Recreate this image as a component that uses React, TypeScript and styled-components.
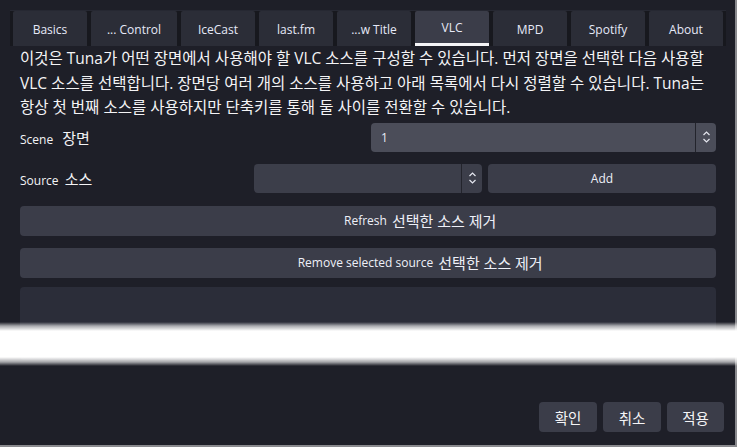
import React from "react";
import styled, { createGlobalStyle } from "styled-components";

const Global = createGlobalStyle`
  html, body { margin: 0; padding: 0; background: #8a8a8e; }
  body { width: 737px; height: 447px; overflow: hidden; }
  * { box-sizing: border-box; }
`;

const FONT = `"Open Sans", "Noto Sans CJK KR", sans-serif`;

const Root = styled.div`
  position: relative;
  width: 735px;
  height: 445px;
  background: #1e1f28;
  display: flex;
  flex-direction: column;
  font-family: ${FONT};
  color: #f2f3f7;
`;

const TabBar = styled.div`
  margin: 10px 0 0 10px;
  width: 716px;
  height: 36px;
  display: flex;
  gap: 4px;
  padding: 0 3px;
  background: #17181e;
  border-top: 1px solid #262832;
`;

const Tab = styled.div<{ $w: number; $active?: boolean }>`
  width: ${(p) => p.$w}px;
  height: 100%;
  display: flex;
  align-items: center;
  justify-content: center;
  padding-top: ${(p) => (p.$active ? "0" : "2px")};
  background: ${(p) => (p.$active ? "#3b3d49" : "#2b2d37")};
  border-radius: 2px 2px 0 0;
  border-bottom: ${(p) => (p.$active ? "3px solid #f4f4f6" : "none")};
  font-size: 12px;
  color: #e6e9f7;
  white-space: nowrap;
`;

const Content = styled.div`
  display: flex;
  flex-direction: column;
  padding: 0 19px 0 20px;
`;

const Description = styled.p`
  margin: 0;
  font-size: 15.5px;
  line-height: 24.5px;
  color: #f4f4f6;
`;

const Row = styled.div<{ $mt: number }>`
  display: flex;
  align-items: center;
  height: 29px;
  margin-top: ${(p) => p.$mt}px;
  gap: 6px;
`;

const Label = styled.div`
  flex: 1;
  font-size: 12px;
  color: #f4f4f6;
  white-space: nowrap;
`;

const Ko = styled.span<{ $overflow?: boolean; $gap?: number }>`
  font-size: 15px;
  margin-left: ${(p) => p.$gap ?? 2}px;
  ${(p) =>
    p.$overflow
      ? `display: inline-block; width: 0; white-space: nowrap; overflow: visible;`
      : ""}
`;

const SpinBox = styled.div<{ $w: number; $bg: string }>`
  width: ${(p) => p.$w}px;
  height: 100%;
  display: flex;
  align-items: stretch;
  background: ${(p) => p.$bg};
  border-radius: 4px;
  overflow: hidden;
`;

const SpinValue = styled.div`
  flex: 1;
  display: flex;
  align-items: center;
  padding-left: 10px;
  font-size: 12px;
  color: #e8ebf7;
  border-right: 1px solid #23242c;
`;

const SpinArrows = styled.div`
  width: 20px;
  display: flex;
  align-items: center;
  justify-content: center;
`;

const Button = styled.div<{ $w?: number; $mt?: number; $h?: number }>`
  ${(p) => (p.$w ? `width: ${p.$w}px;` : "")}
  height: ${(p) => p.$h ?? 29}px;
  ${(p) => (p.$mt !== undefined ? `margin-top: ${p.$mt}px;` : "")}
  display: flex;
  align-items: center;
  justify-content: center;
  background: #3b3d49;
  border-radius: 4px;
  font-size: 12px;
  color: #eef0f8;
  white-space: nowrap;
`;

const ListBox = styled.div`
  margin-top: 9px;
  height: 73px;
  background: #2b2d39;
  border-radius: 4px;
`;

const BottomBar = styled.div`
  margin-top: auto;
  display: flex;
  justify-content: flex-end;
  gap: 6px;
  padding: 0 11px 13px 0;
`;

const DialogButton = styled.div<{ $w: number }>`
  width: ${(p) => p.$w}px;
  height: 30px;
  display: flex;
  align-items: center;
  justify-content: center;
  background: #3b3d49;
  border-radius: 4px;
  font-size: 14.5px;
  color: #f4f4f6;
`;

const Band = styled.div`
  position: absolute;
  left: 0;
  top: 322px;
  width: 737px;
  height: 44px;
  background: linear-gradient(
    to bottom,
    rgba(255, 255, 255, 0) 0px,
    rgba(255, 255, 255, 0.6) 4px,
    #ffffff 9px,
    #ffffff 35px,
    rgba(255, 255, 255, 0.6) 40px,
    rgba(255, 255, 255, 0) 44px
  );
  pointer-events: none;
`;

const Chevrons = () => (
  <svg width="9" height="14" viewBox="0 0 9 14" fill="none">
    <path d="M1.5 5 L4.5 2 L7.5 5" stroke="#e4e6ee" strokeWidth="1.2" />
    <path d="M1.5 9 L4.5 12 L7.5 9" stroke="#e4e6ee" strokeWidth="1.2" />
  </svg>
);

const tabs: { label: string; w: number; active?: boolean }[] = [
  { label: "Basics", w: 74 },
  { label: "... Control", w: 86 },
  { label: "IceCast", w: 74 },
  { label: "last.fm", w: 74 },
  { label: "...w Title", w: 74 },
  { label: "VLC", w: 74, active: true },
  { label: "MPD", w: 74 },
  { label: "Spotify", w: 74 },
  { label: "About", w: 74 },
];

export default function App() {
  return (
    <>
      <Global />
      <Root>
        <TabBar>
          {tabs.map((t) => (
            <Tab key={t.label} $w={t.w} $active={t.active}>
              {t.label}
            </Tab>
          ))}
        </TabBar>
        <Content>
          <Description>
            이것은 Tuna가 어떤 장면에서 사용해야 할 VLC 소스를 구성할 수 있습니다. 먼저 장면을 선택한 다음 사용할
            VLC 소스를 선택합니다. 장면당 여러 개의 소스를 사용하고 아래 목록에서 다시 정렬할 수 있습니다. Tuna는
            항상 첫 번째 소스를 사용하지만 단축키를 통해 둘 사이를 전환할 수 있습니다.
          </Description>
          <Row $mt={3}>
            <Label>
              Scene <Ko $gap={6}>장면</Ko>
            </Label>
            <SpinBox $w={345} $bg="#4b4d59">
              <SpinValue>1</SpinValue>
              <SpinArrows>
                <Chevrons />
              </SpinArrows>
            </SpinBox>
          </Row>
          <Row $mt={12}>
            <Label>
              Source <Ko $gap={3}>소스</Ko>
            </Label>
            <SpinBox $w={228} $bg="#3c3e4a">
              <SpinValue />
              <SpinArrows>
                <Chevrons />
              </SpinArrows>
            </SpinBox>
            <Button $w={228}>Add</Button>
          </Row>
          <Button $mt={13} $h={30}>
            Refresh&nbsp;
            <Ko $overflow>선택한 소스 제거</Ko>
          </Button>
          <Button $mt={12} $h={30}>
            Remove selected source&nbsp;
            <Ko $overflow>선택한 소스 제거</Ko>
          </Button>
          <ListBox />
        </Content>
        <BottomBar>
          <DialogButton $w={58}>확인</DialogButton>
          <DialogButton $w={58}>취소</DialogButton>
          <DialogButton $w={57}>적용</DialogButton>
        </BottomBar>
        <Band />
      </Root>
    </>
  );
}
